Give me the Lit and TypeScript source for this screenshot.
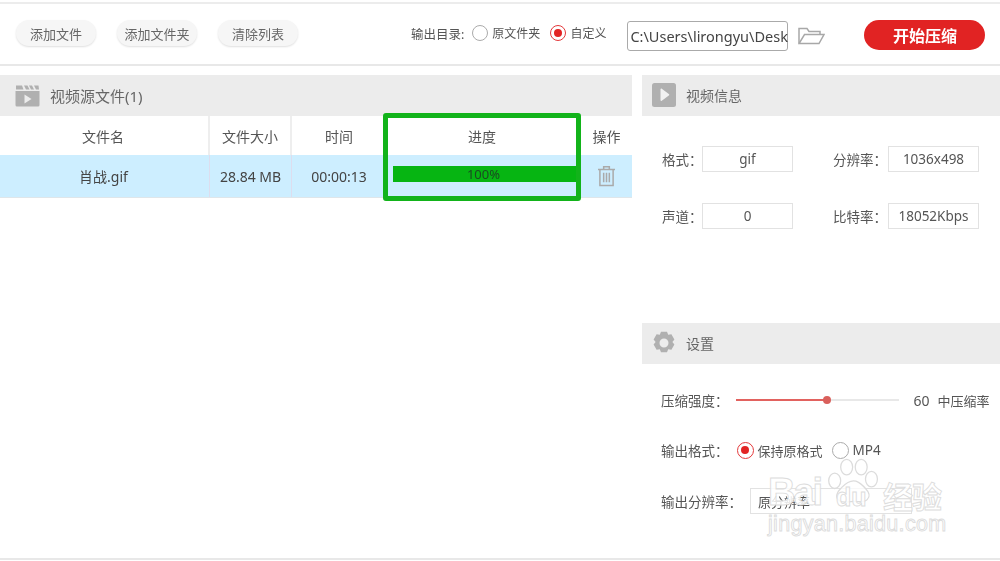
import { LitElement, html, css } from "lit";
import { customElement } from "lit/decorators.js";

@customElement("app-root")
export class AppRoot extends LitElement {
  static styles = css`
    :host { display: block; width: 1000px; height: 561px; overflow: hidden; background: #fff; position: relative;
      font-family: "Noto Sans", "Noto Sans CJK SC", sans-serif; font-size: 13px; color: #555; }
    .page { width: 1000px; height: 561px; display: flex; flex-direction: column; padding: 2px 0 1px; box-sizing: border-box; filter: blur(0.35px); }
    .toolbar { height: 60px; border-top: 2px solid #ececec; border-bottom: 2px solid #e8e8e8; display: flex; align-items: center; padding-left: 16px; box-sizing: content-box; }
    .btn { height: 26px; margin-top: -2px; border-radius: 13px; background: #f6f6f6; box-shadow: 0 1px 2px rgba(0,0,0,.13); display: flex; align-items: center; justify-content: center; font-size: 13px; width: 80px; color: #666; }
    .btn + .btn { margin-left: 21px; }
    .out { margin-left: 113px; margin-right: 8px; margin-top: -2px; font-size: 12.5px; }
    .radio { width: 16px; height: 16px; border-radius: 50%; border: 1px solid #aaa; box-sizing: border-box; background: #fff; display: inline-flex; align-items: center; justify-content: center; flex: none; }
    .radio.on { border: 1.5px solid #e3383a; }
    .radio.on::after { content: ""; width: 8px; height: 8px; border-radius: 50%; background: #e22424; }
    .toolbar .radio, .toolbar .lab { margin-top: -2px; }
    .lab { font-size: 12px; margin-left: 4px; margin-right: 10px; color: #555; }
    .lab.end { margin-right: 0; }
    .path { margin-left: 21px; margin-top: 4px; width: 161px; height: 30px; border: 1px solid #aaa; border-radius: 3px; box-sizing: border-box; display: flex; align-items: center; font-size: 14.5px; color: #444; padding-left: 2px; white-space: nowrap; }
    .folder { margin-left: 10px; margin-top: 4px; width: 27px; height: 20px; }
    .go { margin-left: 39px; margin-top: 2px; width: 121px; height: 30px; border-radius: 15px; background: #e12323; color: #fff; font-size: 16px; font-weight: 700; display: flex; align-items: center; justify-content: center; }
    .main { display: grid; grid-template-columns: 632px 358px; column-gap: 10px; flex: 1; padding-top: 9px; align-items: start; }
    .head { height: 41px; padding-bottom: 1px; box-sizing: border-box; background: #ececec; display: flex; align-items: center; color: #666; font-size: 14px; }
    .head svg { flex: none; }
    .head.l { padding-left: 15px; gap: 10px; font-size: 15px; }
    .head.r { padding-left: 10px; gap: 10px; }
    .row { display: grid; grid-template-columns: 210px 82px 91px 198px 51px; text-align: center; }
    .row > div { display: flex; align-items: center; justify-content: center; box-sizing: border-box; }
    .row > div:nth-child(3) { padding-left: 3px; }
    .row > div:nth-child(1) { padding-right: 2px; }
    .hd { height: 39px; }
    .hd > div { font-size: 14px; }
    .hd > div:nth-child(-n+2) { border-right: 2px solid #eee; }
    .bd { height: 42px; background: #cdeeff; border-bottom: 1px solid #dfe6ea; }
    .bd > div { font-size: 14px; color: #444; }
    .bd > div:nth-child(-n+2) { border-right: 1px solid #dde; }
    .bd > .prog { justify-content: flex-start; padding-left: 10px; }
    .bar { width: 186px; height: 16px; background: #06b512; font-size: 13px; display: flex; align-items: center; justify-content: center; margin-top: -4px; line-height: 1; color: #1b4a22; padding-right: 5px; box-sizing: border-box; }
    .info { height: 207px; display: grid; grid-template-columns: 151px 1fr; grid-auto-rows: 27px; row-gap: 30px; padding: 29px 0 0 20px; box-sizing: border-box; }
    .field { display: flex; align-items: center; font-size: 13.5px; }
    .field.w { padding-left: 20px; }
    .field .name { white-space: nowrap; width: 40px; }
    .field.w .name { width: 55px; }
    .val { width: 91px; height: 26px; box-sizing: border-box; border: 1px solid #e2e2e2; display: flex; align-items: center; justify-content: center; font-size: 13.5px; }
    .set { padding: 24px 0 0 19px; display: flex; flex-direction: column; }
    .line { height: 24px; display: flex; align-items: center; font-size: 13.5px; white-space: nowrap; }
    .l2 { margin-top: 26px; }
    .l3 { margin-top: 27px; }
    .track { width: 163px; height: 2px; background: #e8e8e8; position: relative; margin-left: 7px; }
    .fill { height: 2px; width: 91px; background: #e2625f; }
    .dot { position: absolute; left: 87px; top: -3px; width: 8px; height: 8px; border-radius: 50%; background: #d9605c; }
    .num { margin-left: 15px; font-size: 14px; }
    .rate { margin-left: 8px; font-size: 13px; }
    .big { width: 17px; height: 17px; }
    .fmt-on { margin-left: 8px; border-color: #bbb; }
    .fmt-lab { font-size: 13px; margin-left: 4px; margin-right: 9px; }
    .mp4 { font-size: 13.5px; margin-left: 4px; }
    .sel { width: 162px; height: 26px; justify-content: flex-start; padding-left: 7px; margin-left: 8px; font-size: 13px; }
    .bottom { height: 2px; background: #e8e8e8; }
    .watermark { position: absolute; left: 765px; top: 450px; width: 190px; height: 90px; pointer-events: none; color: rgba(255,255,255,.85); -webkit-text-stroke: .9px #dcdcdc; }
    .paw { position: absolute; left: 62px; top: 5px; }
    .wm1 { position: absolute; left: 3px; top: 21px; font: 700 38px "Liberation Sans", sans-serif; white-space: nowrap; letter-spacing: -2px; }
    .du { position: absolute; left: 71px; top: 33px; font: 700 25px "Liberation Sans", sans-serif; white-space: nowrap; }
    .wm2 { position: absolute; left: 118px; top: 25px; font: 700 30px "Noto Sans CJK SC", sans-serif; white-space: nowrap; line-height: 40px; letter-spacing: -1px; }
    .wm3 { position: absolute; left: 3px; top: 62px; font: 400 21.5px "Liberation Sans", sans-serif; white-space: nowrap; letter-spacing: .3px; }
    .pick { position: absolute; left: 383px; top: 113px; width: 198px; height: 88px; box-sizing: border-box; border: 5px solid #12b31a; border-radius: 3px; filter: blur(.3px); }
  `;

  render() {
    const gray = "#b0b0b0";
    return html`
      <div class="page">
        <div class="toolbar">
          <div class="btn">添加文件</div>
          <div class="btn">添加文件夹</div>
          <div class="btn">清除列表</div>
          <div class="out">输出目录:</div>
          <span class="radio"></span><span class="lab">原文件夹</span>
          <span class="radio on"></span><span class="lab end">自定义</span>
          <div class="path">C:\\Users\\lirongyu\\Desk</div>
          <svg class="folder" viewBox="0 0 27 20" fill="none" stroke="#a8a8a8" stroke-width="1.5"><path d="M1 17V2.500h8l2 3h11v3"/><path d="M1 17.500h20l5-9H6.500z"/></svg>
          <div class="go">开始压缩</div>
        </div>
        <div class="main">
          <section>
            <div class="head l">
              <svg width="25" height="23" viewBox="0 0 25 23"><path fill="${gray}" d="M1 1.500h6l1.500 4H1zM9 1.500h3.500l2 4H11zM14 1.500h3l2 4h-3zM19 1.500h4.500l.5 4h-3zM.5 7h24v14a1.500 1.500 0 0 1-1.500 1.500H2A1.500 1.500 0 0 1 .5 21z"/><path fill="#ececec" d="M9.500 10.500l7 4.500-7 4.500z"/></svg>
              视频源文件(1)
            </div>
            <div class="row hd"><div>文件名</div><div>文件大小</div><div>时间</div><div>进度</div><div>操作</div></div>
            <div class="row bd">
              <div>肖战.gif</div><div>28.84 MB</div><div>00:00:13</div>
              <div class="prog"><div class="bar">100%</div></div>
              <div>
                <svg width="17" height="22" viewBox="0 0 18 22" fill="none" stroke="#aaa" stroke-width="1.6"><path d="M0 4h18M6 4V1.200h6V4"/><path d="M2 4v17h14V4"/><path d="M6 7.500v10M9 7.500v10M12 7.500v10"/></svg>
              </div>
            </div>
          </section>
          <aside>
            <div class="head r">
              <svg width="24" height="24" viewBox="0 0 24 24"><rect width="24" height="24" rx="2.500" fill="${gray}"/><path fill="#f2f2f2" d="M8.500 6.500c0-.8.7-1.100 1.300-.7l7 5.200c.6.400.6 1.200 0 1.600l-7 5.200c-.6.400-1.300.1-1.300-.7z"/></svg>
              视频信息
            </div>
            <div class="info">
              <div class="field"><span class="name">格式：</span><div class="val">gif</div></div>
              <div class="field w"><span class="name">分辨率：</span><div class="val">1036x498</div></div>
              <div class="field"><span class="name">声道：</span><div class="val">0</div></div>
              <div class="field w"><span class="name">比特率：</span><div class="val">18052Kbps</div></div>
            </div>
            <div class="head r">
              <svg width="24" height="24" viewBox="0 0 24 24"><path fill-rule="evenodd" fill="${gray}" d="M9 .8h6l1.200 3 3.200-.5 3 5.200-2 2.500 2 2.500-3 5.200-3.200-.5-1.200 3H9l-1.200-3-3.200.5-3-5.200 2-2.500-2-2.500 3-5.200 3.200.5zM12 7.500a4.500 4.500 0 1 0 0 9 4.500 4.500 0 0 0 0-9z"/></svg>
              设置
            </div>
            <div class="set">
              <div class="line">压缩强度：<div class="track"><div class="fill"></div><div class="dot"></div></div>
                <span class="num">60</span><span class="rate">中压缩率</span></div>
              <div class="line l2">输出格式：<span class="radio on big fmt-on"></span><span class="lab fmt-lab">保持原格式</span><span class="radio big"></span><span class="lab mp4">MP4</span></div>
              <div class="line l3">输出分辨率：<div class="val sel">原分辨率</div></div>
            </div>
          </aside>
        </div>
        <div class="bottom"></div>
      </div>
      <div class="pick"></div>
      <div class="watermark">
        <svg class="paw" width="53" height="55" viewBox="0 0 62 58" fill="rgba(255,255,255,.75)" stroke="#dcdcdc" stroke-width="1.500">
          <ellipse cx="9" cy="27" rx="7" ry="9"/><ellipse cx="23" cy="11" rx="7" ry="9"/><ellipse cx="40" cy="11" rx="7" ry="9"/><ellipse cx="52" cy="25" rx="7" ry="9"/>
          <path d="M31 27c7 0 10 5 14 9s6 9 2 13-10 2-16 2-12 3-17-1-2-10 2-14 8-9 15-9z"/>
        </svg>
        <div class="wm1">Bai</div>
        <div class="du">du</div>
        <div class="wm2">经验</div>
        <div class="wm3">jingyan.baidu.com</div>
      </div>
    `;
  }
}
